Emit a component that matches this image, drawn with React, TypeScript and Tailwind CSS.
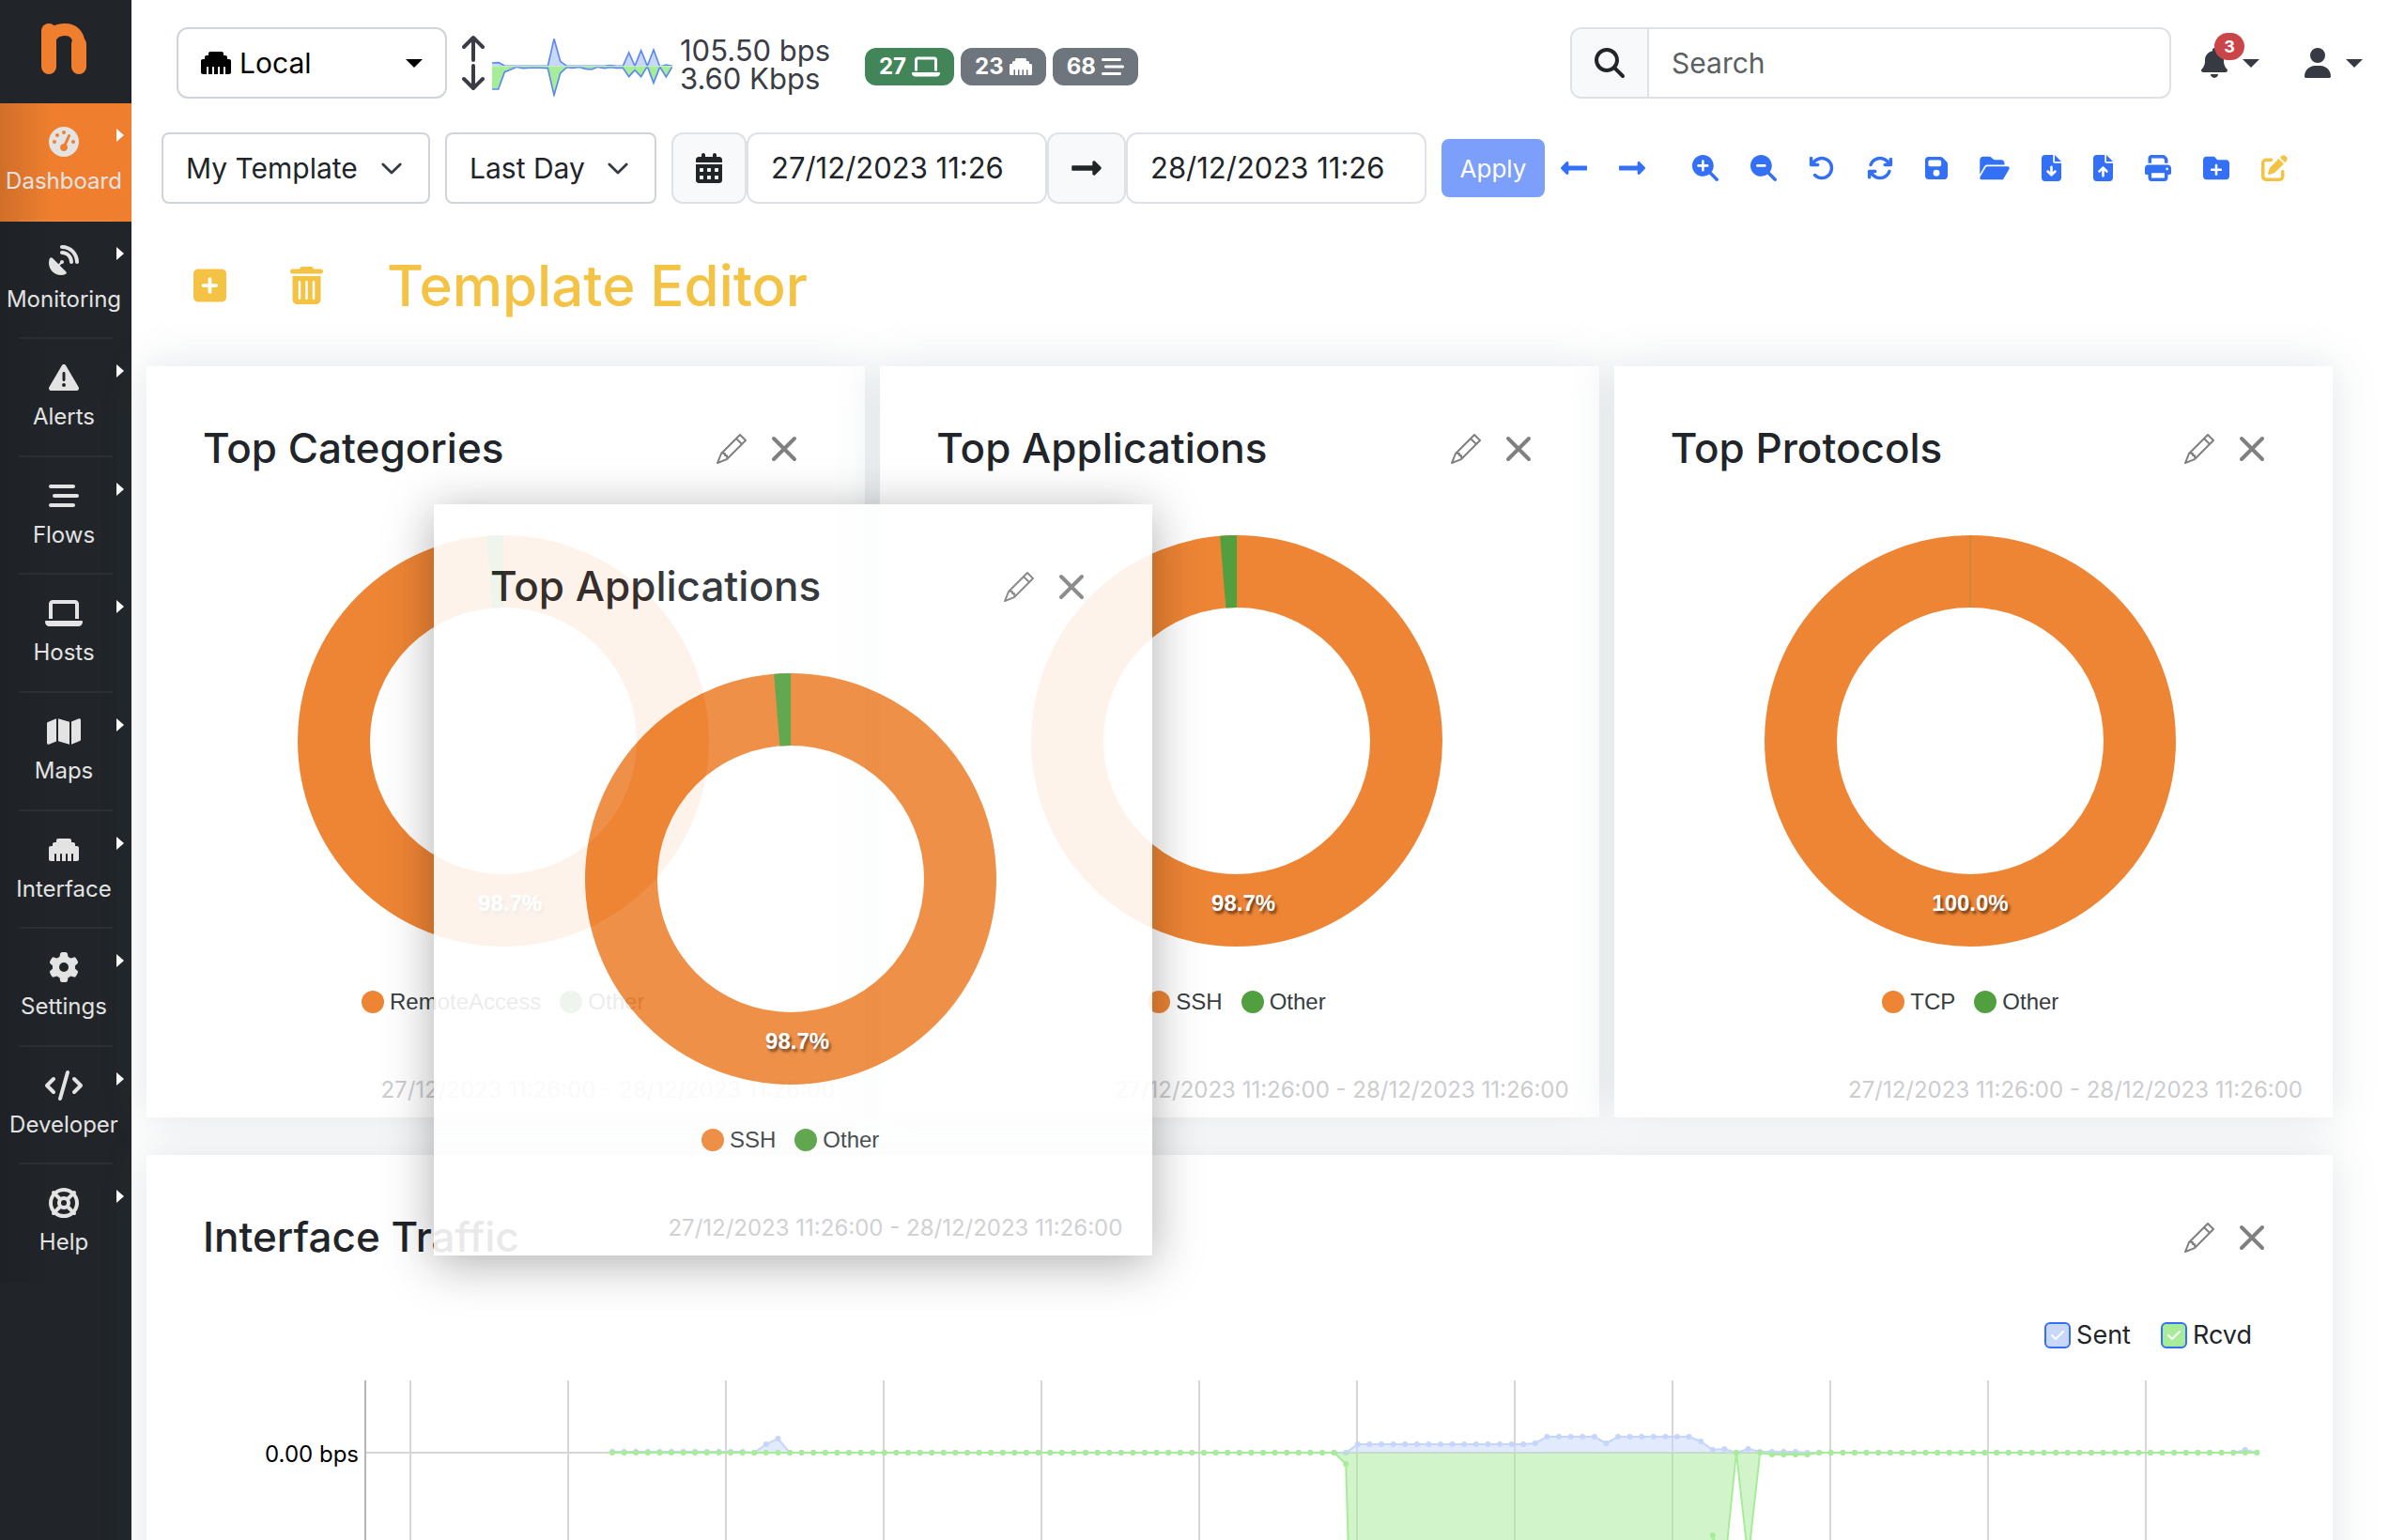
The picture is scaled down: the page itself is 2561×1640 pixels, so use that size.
import type { ReactNode } from "react";
import type { IconType } from "react-icons";
import { BsPencil } from "react-icons/bs";
import { FaLongArrowAltLeft, FaLongArrowAltRight } from "react-icons/fa";
import {
  FaArrowRotateLeft,
  FaArrowsRotate,
  FaBarsStaggered,
  FaBell,
  FaCalendarDays,
  FaCheck,
  FaCode,
  FaEthernet,
  FaFileArrowDown,
  FaFileArrowUp,
  FaFloppyDisk,
  FaFolderOpen,
  FaFolderPlus,
  FaGaugeHigh,
  FaGear,
  FaLaptop,
  FaLifeRing,
  FaMagnifyingGlass,
  FaMagnifyingGlassMinus,
  FaMagnifyingGlassPlus,
  FaMap,
  FaPenToSquare,
  FaPrint,
  FaSatelliteDish,
  FaSquarePlus,
  FaTrashCan,
  FaTriangleExclamation,
  FaUser,
} from "react-icons/fa6";

const ORANGE = "#ee8535";
const GREEN = "#529f3f";

type NavItem = { label: string; icon: IconType; width: string; active?: boolean };

const navItems: NavItem[] = [
  { label: "Dashboard", icon: FaGaugeHigh, width: "w-8", active: true },
  { label: "Monitoring", icon: FaSatelliteDish, width: "w-8" },
  { label: "Alerts", icon: FaTriangleExclamation, width: "w-8" },
  { label: "Flows", icon: FaBarsStaggered, width: "w-8" },
  { label: "Hosts", icon: FaLaptop, width: "w-10" },
  { label: "Maps", icon: FaMap, width: "w-9" },
  { label: "Interface", icon: FaEthernet, width: "w-8" },
  { label: "Settings", icon: FaGear, width: "w-8" },
  { label: "Developer", icon: FaCode, width: "w-10" },
  { label: "Help", icon: FaLifeRing, width: "w-8" },
];

function Logo() {
  return (
    <svg viewBox="0 0 48 54" className="h-[54px] w-12" fill="none" stroke="#ef7f2f" strokeLinecap="round">
      <path d="M8 8V46" strokeWidth="16" />
      <path d="M9 17C12 9 18 6.5 25 6.5C34 6.5 40 12 40 22V46" strokeWidth="13" />
      <path d="M40 22V46" strokeWidth="16" />
    </svg>
  );
}

function Sidebar() {
  return (
    <aside className="flex w-[140px] shrink-0 flex-col bg-[#212529]">
      <a href="#home" aria-label="Home" className="flex h-[110px] items-start justify-center pt-[25px] pr-1">
        <Logo />
      </a>
      <nav className="grid h-[1256px] auto-rows-fr">
        {navItems.map(({ label, icon: Icon, width, active }) => (
          <a
            key={label}
            href={`#${label.toLowerCase()}`}
            className={
              active
                ? "group relative flex flex-col items-center bg-[#ef7f2f] bg-linear-to-r from-black/13 to-transparent to-40% pt-[25px] pr-1 text-[#e3e3e3]"
                : "group relative flex flex-col items-center bg-linear-to-r from-black/10 to-transparent to-40% pt-[25px] pr-1 text-[#e3e3e3]"
            }
          >
            <Icon className={`h-8 ${width}`} />
            <span className="mt-2.5 text-2xl leading-8">{label}</span>
            <span className="absolute top-[27px] right-2 border-y-[7px] border-l-8 border-y-transparent border-l-white" />
            <span className="absolute inset-x-5 bottom-0 h-0.5 bg-white/5 group-last:hidden" />
          </a>
        ))}
      </nav>
    </aside>
  );
}

function Caret({ className }: { className: string }) {
  return (
    <svg viewBox="0 0 18 9" className={className} fill="currentColor" aria-hidden="true">
      <path d="M0 0H18L9 9Z" />
    </svg>
  );
}

function Chevron() {
  return (
    <svg
      viewBox="0 0 24 14"
      className="pointer-events-none absolute right-7 h-[13px] w-[22px]"
      fill="none"
      stroke="#343a40"
      strokeWidth="3"
      strokeLinecap="round"
      strokeLinejoin="round"
      aria-hidden="true"
    >
      <path d="M2 2L12 12L22 2" />
    </svg>
  );
}

function TrafficSpark() {
  const up =
    "132,143 153,142 172,152 190,153 310,153 330,66 350,138 371,153 490,153 510,151 530,153 550,153 569,110 588,153 608,103 628,153 648,101 668,155 688,149 708,153";
  const down =
    "132,227 152,227 172,172 190,165 211,156 230,160 270,158 310,160 330,246 350,176 371,157 390,159 410,156 430,162 450,164 470,156 490,160 510,157 530,159 550,159 569,187 588,166 608,187 628,154 648,207 668,156 688,188 708,155";
  return (
    <svg viewBox="132 62 576 189" className="h-[63px] w-48" aria-label="Traffic">
      <polygon points={`132,154 ${up} 708,154`} fill="#c9d7f8" />
      <polygon points={`132,154 ${down} 708,154`} fill="#a6ec99" />
      <g fill="none" stroke="#5b89f2" strokeWidth="5">
        <polyline points={up} />
        <polyline points={down} />
      </g>
      <path d="M132 154H708" stroke="#c6eccb" strokeWidth="4" />
    </svg>
  );
}

function Badge({ value, tone, children }: { value: number; tone: string; children: ReactNode }) {
  return (
    <a
      href="#status"
      className={`flex h-10 items-center gap-1.5 rounded-xl px-[15px] text-2xl leading-none font-bold text-white ${tone}`}
    >
      {value}
      {children}
    </a>
  );
}

function TopBar() {
  return (
    <header className="flex items-center justify-between pr-[45px] pl-12">
      <div className="flex items-center">
        <div className="relative flex h-[76px] w-72 items-center rounded-xl border-2 border-[#ced4da] text-black">
          <FaEthernet className="pointer-events-none absolute left-6 size-8" />
          <select aria-label="Interface" className="h-full w-full appearance-none bg-transparent pl-[65px] text-[30px]">
            <option>Local</option>
          </select>
          <Caret className="pointer-events-none absolute right-6 h-[9px] w-[18px]" />
        </div>
        <svg
          viewBox="0 0 24 60"
          className="ml-4 h-[60px] w-6"
          fill="none"
          stroke="#3a3d46"
          strokeWidth="4"
          strokeLinecap="round"
          strokeLinejoin="round"
          aria-hidden="true"
        >
          <path d="M12 27V3M2 13L12 3L22 13M12 33V57M2 47L12 57L22 47" />
        </svg>
        <span className="mt-2 ml-2 flex">
          <TrafficSpark />
        </span>
        <div className="mt-1 ml-2 w-44 text-[31px] leading-[30px] whitespace-nowrap text-[#3a3d46]">
          <p>105.50 bps</p>
          <p>3.60 Kbps</p>
        </div>
        <div className="mt-2 ml-[21px] flex gap-[7px]">
          <Badge value={27} tone="bg-[#428558]">
            <FaLaptop className="h-6 w-[30px]" />
          </Badge>
          <Badge value={23} tone="bg-[#6e757c]">
            <FaEthernet className="size-6" />
          </Badge>
          <Badge value={68} tone="bg-[#6e757c]">
            <FaBarsStaggered className="size-6" />
          </Badge>
        </div>
      </div>
      <div className="flex items-center">
        <label className="flex h-[76px] w-[640px] overflow-hidden rounded-xl border-2 border-[#dee2e6]">
          <span className="flex w-[82px] items-center justify-center border-r-2 border-[#dee2e6] bg-[#f8f9fa] text-[#212529]">
            <FaMagnifyingGlass className="size-8" />
          </span>
          <input
            type="search"
            aria-label="Search"
            placeholder="Search"
            className="min-w-0 flex-1 px-6 text-[30px] placeholder:text-[#5b6063]"
          />
        </label>
        <button type="button" aria-label="Notifications" className="relative ml-8 flex items-center gap-4 text-[#363a43]">
          <FaBell className="h-8 w-7" />
          <Caret className="h-[9px] w-[18px]" />
          <span className="absolute -top-4 left-3.5 flex h-[29px] w-8 items-center justify-center rounded-full bg-[#cb444a] text-lg leading-none font-bold text-white">
            3
          </span>
        </button>
        <button type="button" aria-label="Account" className="ml-12 flex items-center gap-4 text-[#363a43]">
          <FaUser className="h-8 w-7" />
          <Caret className="h-[9px] w-[18px]" />
        </button>
      </div>
    </header>
  );
}

type Tool = { label: string; icon: IconType; width: string };

const tools: Tool[] = [
  { label: "Zoom in", icon: FaMagnifyingGlassPlus, width: "w-7" },
  { label: "Zoom out", icon: FaMagnifyingGlassMinus, width: "w-7" },
  { label: "Undo", icon: FaArrowRotateLeft, width: "w-7" },
  { label: "Refresh", icon: FaArrowsRotate, width: "w-7" },
  { label: "Save", icon: FaFloppyDisk, width: "w-6" },
  { label: "Open", icon: FaFolderOpen, width: "w-8" },
  { label: "Download", icon: FaFileArrowDown, width: "w-[21px]" },
  { label: "Upload", icon: FaFileArrowUp, width: "w-[21px]" },
  { label: "Print", icon: FaPrint, width: "w-7" },
  { label: "New", icon: FaFolderPlus, width: "w-7" },
];

function ToolButton({ label, icon: Icon, width }: Tool) {
  return (
    <button type="button" aria-label={label} className="px-[17px] text-[#3370f6]">
      <Icon className={`h-7 ${width}`} />
    </button>
  );
}

function Toolbar() {
  return (
    <div className="mt-9 flex items-center pl-8">
      <div className="relative flex h-[76px] w-[286px] items-center rounded-lg border-2 border-[#ced4da]">
        <select aria-label="Template" className="h-full w-full appearance-none pl-6 text-[30px]">
          <option>My Template</option>
        </select>
        <Chevron />
      </div>
      <div className="relative ml-4 flex h-[76px] w-[225px] items-center rounded-lg border-2 border-[#ced4da]">
        <select aria-label="Period" className="h-full w-full appearance-none pl-6 text-[30px]">
          <option>Last Day</option>
        </select>
        <Chevron />
      </div>
      <div className="ml-4 flex h-[76px]">
        <span className="flex w-20 items-center justify-center rounded-xl border-2 border-[#dee2e6] bg-[#f8f9fa]">
          <FaCalendarDays className="h-8 w-7" />
        </span>
        <input
          aria-label="Begin date"
          defaultValue="27/12/2023 11:26"
          className="w-80 rounded-xl border-2 border-[#dee2e6] px-6 text-[31px]"
        />
        <span className="flex w-[84px] items-center justify-center rounded-xl border-2 border-[#dee2e6] bg-[#f8f9fa]">
          <FaLongArrowAltRight className="h-9 w-8" />
        </span>
        <input
          aria-label="End date"
          defaultValue="28/12/2023 11:26"
          className="w-80 rounded-xl border-2 border-[#dee2e6] px-6 text-[31px]"
        />
      </div>
      <button type="button" className="ml-4 h-[62px] w-[110px] rounded-lg bg-[#7b9ffa] text-[26px] text-white">
        Apply
      </button>
      <button type="button" aria-label="Previous" className="px-[17px] text-[#3370f6]">
        <FaLongArrowAltLeft className="h-8 w-7" />
      </button>
      <button type="button" aria-label="Next" className="px-[17px] text-[#3370f6]">
        <FaLongArrowAltRight className="h-8 w-7" />
      </button>
      <div className="ml-4 flex items-center">
        {tools.map((tool) => (
          <ToolButton key={tool.label} {...tool} />
        ))}
        <button type="button" aria-label="Edit" className="px-[17px] text-[#f5c344]">
          <FaPenToSquare className="size-7" />
        </button>
      </div>
    </div>
  );
}

function EditorBar() {
  return (
    <div className="flex h-[173px] items-center pl-[66px] text-[#f5c344]">
      <button type="button" aria-label="Add chart">
        <FaSquarePlus className="h-10 w-[35px]" />
      </button>
      <button type="button" aria-label="Delete template" className="ml-[68px]">
        <FaTrashCan className="h-10 w-[35px]" />
      </button>
      <h1 className="ml-[68px] text-[60px] leading-none font-medium">Template Editor</h1>
    </div>
  );
}

function CardHeader({ title }: { title: string }) {
  return (
    <div className="flex h-12 items-center justify-between pr-[72px] pl-[60px]">
      <h2 className="pb-0.5 text-[44px] leading-none font-medium whitespace-nowrap">{title}</h2>
      <div className="flex items-center gap-[26px] text-[#808080]">
        <button type="button" aria-label={`Edit ${title}`}>
          <BsPencil className="size-8" />
        </button>
        <button type="button" aria-label={`Close ${title}`}>
          <svg viewBox="0 0 28 28" className="size-7" fill="none" stroke="currentColor" strokeWidth="4" strokeLinecap="round">
            <path d="M3 3L25 25M25 3L3 25" />
          </svg>
        </button>
      </div>
    </div>
  );
}

function Donut({ share }: { share: number }) {
  const point = (radius: number, part: number) => {
    const angle = part * 2 * Math.PI;
    return `${219 + radius * Math.sin(angle)} ${219 - radius * Math.cos(angle)}`;
  };
  const middle = (share / 200) * 2 * Math.PI;
  return (
    <svg viewBox="0 0 438 438" className="size-[438px]">
      <circle cx="219" cy="219" r="180.5" fill="none" stroke={ORANGE} strokeWidth="77" />
      {share < 100 ? (
        <path
          d={`M${point(142, share / 100)}L${point(219, share / 100)}A219 219 0 0 1 ${point(219, 1)}L${point(142, 1)}Z`}
          fill={GREEN}
        />
      ) : (
        <path d="M219 0V77" stroke="#b08a38" />
      )}
      <text
        x={219 + 174 * Math.sin(middle)}
        y={219 - 174 * Math.cos(middle) + 7}
        textAnchor="middle"
        className="fill-white font-['Liberation_Sans',sans-serif] text-2xl font-bold [text-shadow:2px_3px_3px_rgba(0,0,0,0.6)]"
      >
        {`${share.toFixed(1)}%`}
      </text>
    </svg>
  );
}

function LegendItem({ color, label }: { color: string; label: string }) {
  return (
    <span className="flex items-center gap-1.5">
      <svg viewBox="0 0 24 24" className="size-6">
        <circle cx="12" cy="12" r="12" fill={color} />
      </svg>
      {label}
    </span>
  );
}

type DonutCardProps = { title: string; label: string; share: number; dragged?: boolean };

function DonutCard({ title, label, share, dragged }: DonutCardProps) {
  return (
    <section
      className={
        dragged
          ? "absolute top-[147px] left-[322px] w-[calc((100%-125px)/3)] bg-white pt-16 pb-[15px] opacity-90 shadow-[0_8px_48px_rgba(0,0,0,0.35)]"
          : "bg-white pt-16 pb-[15px] shadow-[0_0_44px_rgba(90,118,125,0.19)]"
      }
    >
      <CardHeader title={title} />
      <div className="mt-[68px] flex flex-col items-center pr-1.5">
        <Donut share={share} />
        <div className="mt-[45px] flex h-7 gap-5 font-['Liberation_Sans',sans-serif] text-2xl leading-7 text-[#373d3f]">
          <LegendItem color={ORANGE} label={label} />
          <LegendItem color={GREEN} label="Other" />
        </div>
      </div>
      <p className="mt-[66px] pr-8 text-right text-2xl leading-7 text-[#cbcdcf]">
        27/12/2023 11:26:00 - 28/12/2023 11:26:00
      </p>
    </section>
  );
}

/* Time series: sample index (12.6 px apart) and height of the plotted value. */
const STEP = 12.6;
const START = 263;
const ZERO = 77;

function sentValue(i: number) {
  if (i < 12) return 76;
  if (i === 13) return 68;
  if (i === 14) return 62;
  if (i === 63) return 68;
  if (i > 63 && i < 78) return 68;
  if (i === 78) return 67;
  if (i === 84) return 67;
  if (i > 78 && i < 92) return 60;
  if (i === 92) return 65;
  if (i === 93) return 74;
  if (i === 94) return 73;
  if (i === 96) return 73;
  if (i > 96 && i < 101) return 76;
  if (i === 138) return 74;
  return ZERO;
}

function rcvdValue(i: number) {
  if (i === 62) return 89;
  if (i === 93) return 165;
  if (i === 94) return 200;
  if (i > 62 && i < 95) return 520;
  if (i === 96) return 190;
  if (i > 97 && i < 102) return 79;
  return ZERO;
}

function Series({ value, line, fill }: { value: (i: number) => number; line: string; fill: string }) {
  const samples = Array.from({ length: 140 }, (_, i) => ({ x: START + i * STEP, y: value(i) }));
  const path = samples.map(({ x, y }) => `${x},${y}`).join(" ");
  const last = START + 139 * STEP;
  return (
    <g>
      <polygon points={`${START},${ZERO} ${path} ${last},${ZERO}`} fill={fill} />
      <polyline points={path} fill="none" stroke={line} strokeWidth="2" />
      {samples.map(({ x, y }) => (
        <circle key={x} cx={x} cy={y} r="3" fill={line} />
      ))}
    </g>
  );
}

function TrafficCheck({ label, tone }: { label: string; tone: string }) {
  return (
    <label className="flex items-center gap-1.5">
      <span className="relative flex items-center justify-center">
        <input
          type="checkbox"
          defaultChecked
          className={`size-7 appearance-none rounded-md border-2 border-[#3370f6] ${tone}`}
        />
        <FaCheck className="pointer-events-none absolute size-4 text-white" />
      </span>
      {label}
    </label>
  );
}

function TrafficCard() {
  const gridLines = Array.from({ length: 12 }, (_, i) => 48 + i * 168);
  return (
    <section className="col-span-3 bg-white pt-16 shadow-[0_0_44px_rgba(90,118,125,0.19)]">
      <CardHeader title="Interface Traffic" />
      <div className="mt-16 flex h-8 items-center justify-end gap-8 pr-[86px] text-[27px]">
        <TrafficCheck label="Sent" tone="bg-[#c9d7f8]" />
        <TrafficCheck label="Rcvd" tone="bg-[#a6ec99]" />
      </div>
      <div className="mt-8 flex pr-20">
        <span className="w-[233px] shrink-0 pt-[65px] pr-[7px] text-right text-2xl leading-7 text-black">0.00 bps</span>
        <svg viewBox="0 0 2015 500" className="min-w-0 flex-1 overflow-visible">
          <g stroke="#d6d6d6" strokeWidth="2">
            {gridLines.map((x) => (
              <path key={x} d={`M${x} 0V500`} />
            ))}
            <path d={`M0 ${ZERO}H2015`} />
          </g>
          <path d="M0 0V500" stroke="#b5b5b5" strokeWidth="2" />
          <Series value={sentValue} line="#c6d6fb" fill="rgba(198,214,251,0.5)" />
          <Series value={rcvdValue} line="#a6ec99" fill="rgba(166,233,150,0.5)" />
        </svg>
      </div>
    </section>
  );
}

export default function App() {
  return (
    <div className="flex h-screen overflow-hidden bg-white font-['Inter','Roboto',sans-serif] text-[#212529]">
      <Sidebar />
      <main className="min-w-0 flex-1 pt-[29px]">
        <TopBar />
        <Toolbar />
        <EditorBar />
        <div className="relative grid grid-cols-3 gap-x-4 gap-y-10 pr-[77px] pl-4">
          <DonutCard title="Top Categories" label="RemoteAccess" share={98.7} />
          <DonutCard title="Top Applications" label="SSH" share={98.7} />
          <DonutCard title="Top Protocols" label="TCP" share={100} />
          <TrafficCard />
          <DonutCard title="Top Applications" label="SSH" share={98.7} dragged />
        </div>
      </main>
    </div>
  );
}
